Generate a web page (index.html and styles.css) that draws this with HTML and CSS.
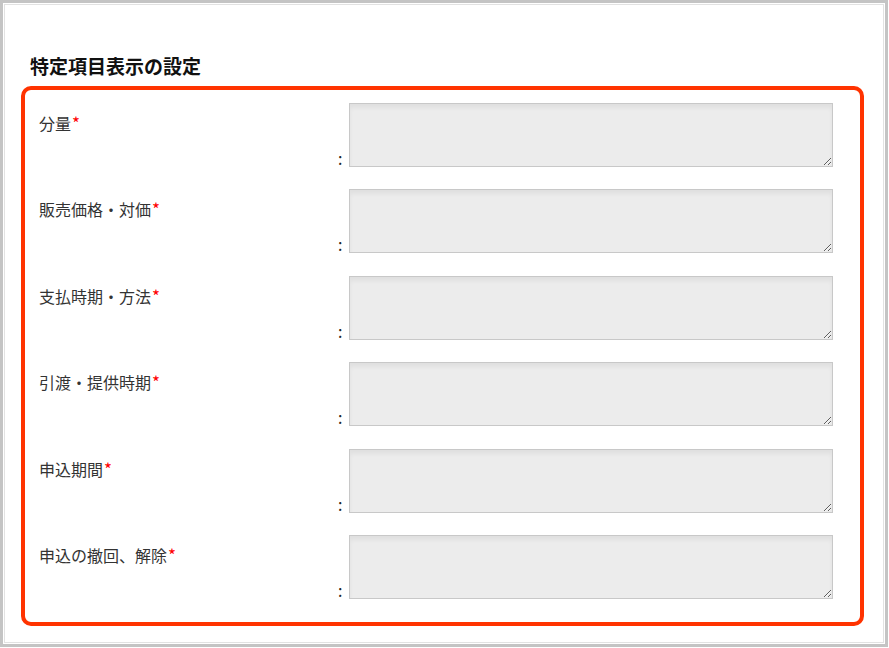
FILE: index.html
```html
<!DOCTYPE html>
<html lang="ja">
<head>
    <meta charset="UTF-8">
    <title>特定項目表示の設定</title>
    <link rel="stylesheet" href="styles.css">
</head>
<body>
    <div class="frame">
        <div class="inner">
            <h2 class="title">特定項目表示の設定</h2>

            <div class="highlight">
                <div class="row">
                    <div class="label">分量<span class="req">*</span></div>
                    <div class="field"><span class="colon">:</span><textarea></textarea></div>
                </div>
                <div class="row">
                    <div class="label">販売価格・対価<span class="req">*</span></div>
                    <div class="field"><span class="colon">:</span><textarea></textarea></div>
                </div>
                <div class="row">
                    <div class="label">支払時期・方法<span class="req">*</span></div>
                    <div class="field"><span class="colon">:</span><textarea></textarea></div>
                </div>
                <div class="row">
                    <div class="label">引渡・提供時期<span class="req">*</span></div>
                    <div class="field"><span class="colon">:</span><textarea></textarea></div>
                </div>
                <div class="row">
                    <div class="label">申込期間<span class="req">*</span></div>
                    <div class="field"><span class="colon">:</span><textarea></textarea></div>
                </div>
                <div class="row">
                    <div class="label">申込の撤回、解除<span class="req">*</span></div>
                    <div class="field"><span class="colon">:</span><textarea></textarea></div>
                </div>
            </div>
        </div>
    </div>
</body>
</html>
```

FILE: styles.css
```css
body {
    margin: 0;
    background: #fff;
    font-family: "Noto Sans CJK JP", "Noto Sans", sans-serif;
    color: #333;
}
.frame {
    box-sizing: border-box;
    width: 888px;
    height: 647px;
    border: 3px solid #c4c4c4;
    padding: 1px;
}
.inner {
    box-sizing: border-box;
    height: 100%;
    border: 1px solid #e2e2e2;
    padding: 47px 0 0 0;
}
.title {
    margin: 0 0 7px 25px;
    font-size: 19px;
    line-height: 27px;
    font-weight: bold;
    color: #111;
}
.highlight {
    box-sizing: border-box;
    width: 843px;
    margin-left: 16px;
    border: 4px solid #ff3300;
    border-radius: 10px;
    padding: 13px 0 23px 14px;
}
.row {
    display: flex;
    margin-bottom: 22.4px;
}
.row:last-child {
    margin-bottom: 0;
}
.label {
    width: 299px;
    padding-top: 9px;
    font-size: 16px;
    line-height: 22px;
    color: #333;
}
.req {
    color: #f00;
    font-size: 17px;
    margin-left: 1px;
}
.field {
    display: flex;
    align-items: flex-end;
}
.colon {
    font-size: 16px;
    line-height: 16px;
    margin-right: 7px;
    margin-bottom: 1px;
    color: #222;
}
textarea {
    box-sizing: border-box;
    width: 484px;
    height: 64px;
    margin: 0;
    border: 1px solid #c8c8c8;
    background: #ececec;
    box-shadow: inset 0 4px 4px rgba(0, 0, 0, 0.05);
}
```
